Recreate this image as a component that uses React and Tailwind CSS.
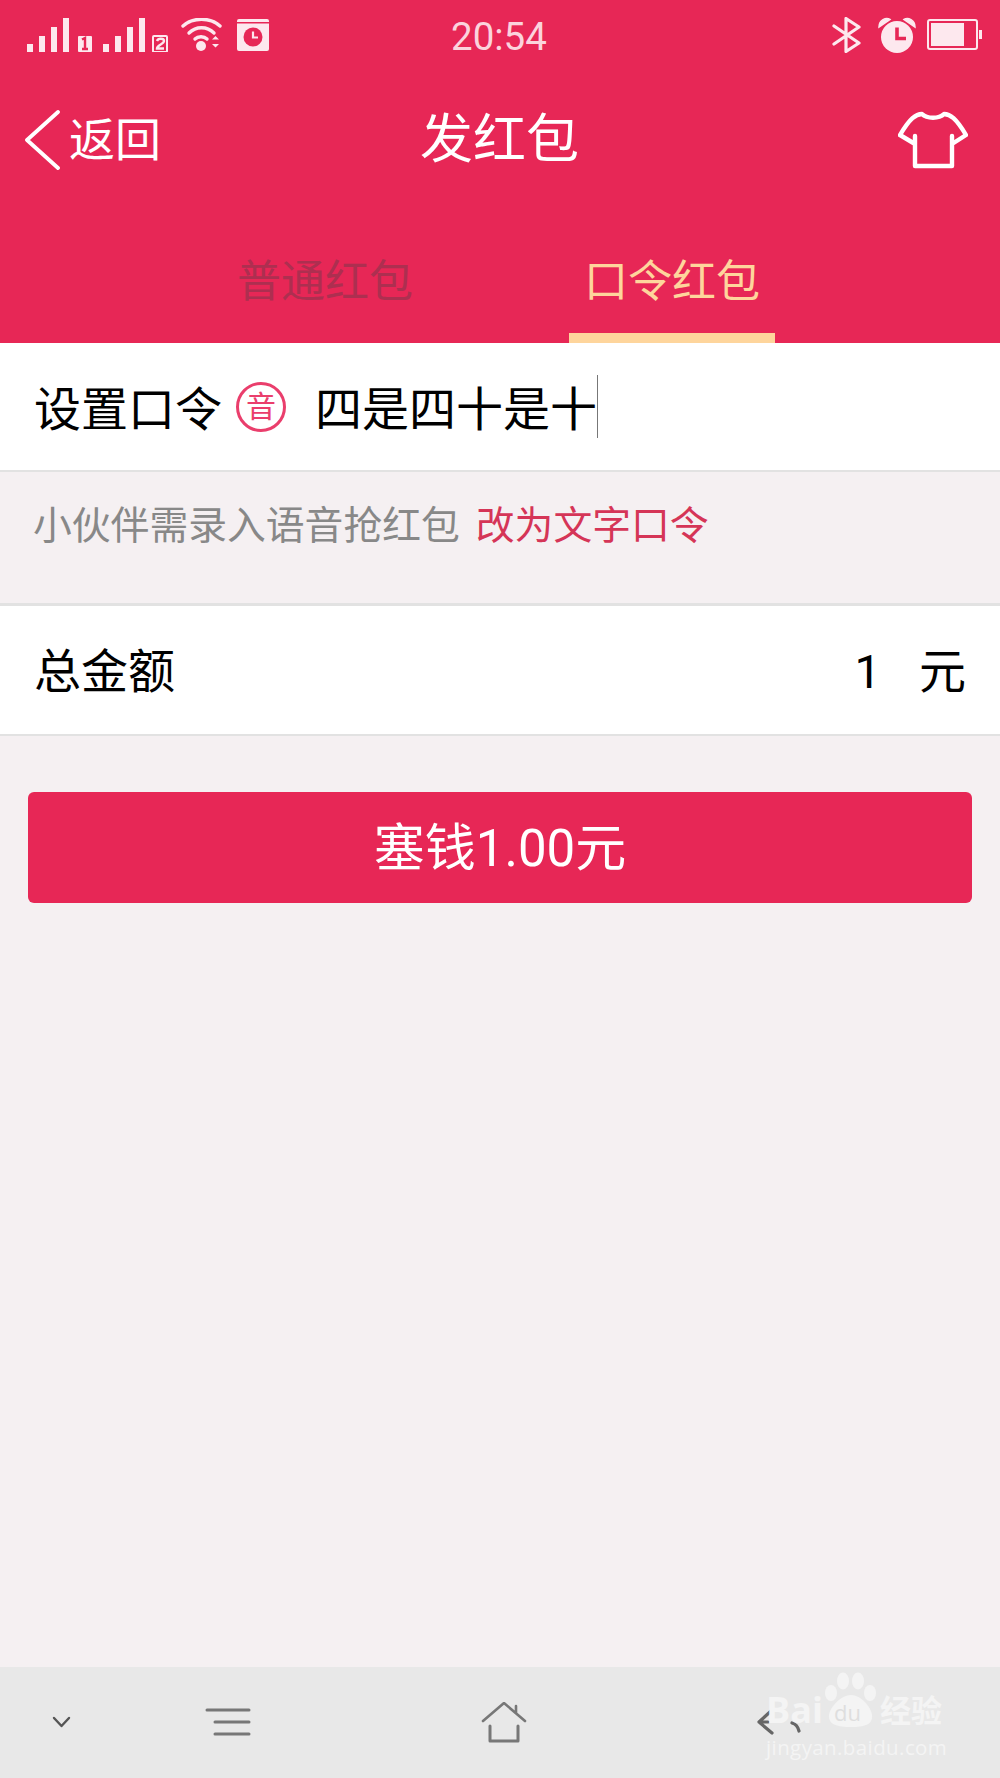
const font = { fontFamily: 'Roboto, "Noto Sans CJK SC", sans-serif' };

function Signal({ n }) {
  return (
    <svg width="76" height="34" viewBox="0 0 76 34" fill="#fde8ee">
      <rect x="0" y="26" width="6" height="8" />
      <rect x="12" y="18" width="6" height="16" />
      <rect x="24" y="9" width="6" height="25" />
      <rect x="36" y="0" width="6" height="34" />
      <rect x={n === 1 ? 51 : 50} y="18" width="14" height="16" rx="1" fill={n === 1 ? '#fde8ee' : 'none'} stroke="#fde8ee" strokeWidth={n === 1 ? 0 : 2} />
      {n === 1 ? (
        <path d="M55 21.500l3-1.500v11M55 31h6" fill="none" stroke="#e72756" strokeWidth="2.400" />
      ) : (
        <path d="M54 23c1-3 7-3 7 0 0 3-7 4-7 7.500h7" fill="none" stroke="#fde8ee" strokeWidth="2.400" />
      )}
    </svg>
  );
}

function StatusBar() {
  return (
    <div className="flex h-[69px] items-center pl-[27px] pr-[18px]">
      <div className="flex w-[260px] items-center">
        <Signal n={1} />
        <Signal n={2} />
        <svg className="ml-[2px] shrink-0" width="42" height="34" viewBox="0 0 42 34" fill="none" stroke="#fde8ee" strokeWidth="3.400" strokeLinecap="round">
          <path d="M2 8C12 -1 29 -1 39 8" />
          <path d="M8 15C15 8 26 8 33 15" />
          <path d="M14 21c3-3 9-3 12 0" />
          <circle cx="20" cy="28" r="5" fill="#fde8ee" stroke="none" />
          <path d="M31 21.500l3.500-3.500 3.500 3.500zM31 26l3.500 3.500 3.500-3.500z" fill="#fde8ee" stroke="none" />
        </svg>
        <svg className="ml-[14px] shrink-0" width="32" height="32" viewBox="0 0 32 32">
          <rect width="32" height="32" rx="2" fill="#fde8ee" />
          <rect y="3" width="32" height="1.500" fill="#e72756" />
          <circle cx="16" cy="18" r="9.500" fill="#e72756" />
          <path d="M16 12.500V18.500H21" fill="none" stroke="#fde8ee" strokeWidth="2.200" />
        </svg>
      </div>
      <div className="ml-[164px] pt-[5px] text-[38.500px] leading-none text-[#fbd3dd]" style={font}>20:54</div>
      <div className="ml-auto flex items-center">
        <svg width="30" height="36" viewBox="0 0 30 36" fill="none" stroke="#fde8ee" strokeWidth="3.200" strokeLinejoin="round" strokeLinecap="round">
          <path d="M2 9L27 26L14 34.500V1.500L27 10L2 27" />
        </svg>
        <svg className="ml-[16px]" width="38" height="36" viewBox="0 0 38 36">
          <circle cx="19" cy="20" r="16" fill="#fde8ee" />
          <path d="M1 10C1 3 8 0 12 2.500ZM37 10C37 3 30 0 26 2.500Z" fill="#fde8ee" stroke="#fde8ee" strokeWidth="1.500" />
          <path d="M19 10.500V21.500H28" fill="none" stroke="#e72756" strokeWidth="3.600" />
        </svg>
        <svg className="ml-[11px]" width="55" height="32" viewBox="0 0 55 32">
          <rect x="1" y="1" width="49" height="29" rx="2" fill="none" stroke="#fde8ee" strokeWidth="2" />
          <rect x="4" y="4" width="33" height="23" fill="#fde8ee" />
          <rect x="52" y="11" width="3" height="9" fill="#fde8ee" />
        </svg>
      </div>
    </div>
  );
}

function NavBar() {
  return (
    <div className="flex h-[142px] items-center pl-[25px] pr-[32px]">
      <div className="flex flex-1 items-center gap-[9px]">
        <svg width="35" height="60" viewBox="0 0 35 60" fill="none" stroke="#fff" strokeWidth="3.800" strokeLinecap="round" strokeLinejoin="round">
          <path d="M33 2L2 30L33 58" />
        </svg>
        <span className="text-[46px] leading-none text-white" style={font}>返回</span>
      </div>
      <span className="ml-[6px] text-[53px] leading-none text-white" style={font}>发红包</span>
      <div className="flex flex-1 justify-end">
        <svg width="70" height="58" viewBox="0 0 70 58" fill="none" stroke="#fff" strokeWidth="4.400" strokeLinejoin="round">
          <path d="M24 3C29 8 41 8 46 3C52 3 58 7 68 24L54 33V25V55H17V25V33L2 24C12 7 18 3 24 3Z" />
        </svg>
      </div>
    </div>
  );
}

function Tabs() {
  return (
    <div className="flex h-[111px]">
      <div className="flex w-[569px] justify-center pt-[28px] pl-[81px]">
        <span className="text-[44px] leading-none text-[#ad2f50]" style={font}>普通红包</span>
      </div>
      <div className="flex w-[206px] flex-col items-center border-b-[10px] border-[#fed59c] pt-[28px]">
        <span className="text-[44px] leading-none text-[#fed59c]" style={font}>口令红包</span>
      </div>
    </div>
  );
}

function BottomBar() {
  return (
    <div className="relative flex h-[111px] items-center bg-[#e8e8e8]">
      <svg className="ml-[52px] shrink-0" width="19" height="13" viewBox="0 0 19 13" fill="none" stroke="#555" strokeWidth="2.400" strokeLinecap="round" strokeLinejoin="round">
        <path d="M2 2L9.500 10L17 2" />
      </svg>
      <svg className="ml-[134px] shrink-0" width="46" height="30" viewBox="0 0 46 30" fill="none" stroke="#777" strokeWidth="3" strokeLinecap="round">
        <path d="M2 2H44M10 14H44M10 26H44" />
      </svg>
      <svg className="ml-[230px] shrink-0" width="46" height="42" viewBox="0 0 46 42" fill="none" stroke="#777" strokeWidth="2.600" strokeLinecap="round" strokeLinejoin="round">
        <path d="M2 19L23 1L44 19M35 4V11" />
        <path d="M9 24V39H37V24" strokeWidth="3" />
      </svg>
      <svg className="ml-[230px] shrink-0" width="46" height="28" viewBox="0 0 46 28" fill="none" stroke="#666" strokeWidth="3.200" strokeLinecap="round" strokeLinejoin="round">
        <path d="M14 2L2 13L15 24M2 13H11M35 14C39 15 41 18 42 22" />
      </svg>

      {/* watermark */}
      <div className="absolute top-[5px] left-[766px] w-[190px] text-[#f4f4f4]" style={{ fontFamily: '"Open Sans", "Noto Sans CJK SC", sans-serif' }}>
        <div className="flex h-[56px] items-end">
          <span className="text-[36px] leading-[36px] font-bold">Bai</span>
          <div className="relative ml-[1px] h-[56px] w-[52px] shrink-0">
            <svg className="absolute top-0 left-0" width="52" height="56" viewBox="0 0 52 56" fill="currentColor">
              <ellipse cx="7" cy="21" rx="6" ry="8" />
              <ellipse cx="19" cy="9" rx="6" ry="8.500" />
              <ellipse cx="34" cy="9" rx="6" ry="8.500" />
              <ellipse cx="46" cy="21" rx="6" ry="8" />
              <path d="M27 23C17 23 6 35 5 43C4 53 14 55 27 55C40 55 49 53 48 43C47 35 37 23 27 23Z" />
            </svg>
            <span className="absolute bottom-[5px] left-[10px] text-[22px] leading-none text-[#dedede]">du</span>
          </div>
          <span className="ml-[4px] text-[31px] leading-[36px] font-bold whitespace-nowrap">经验</span>
        </div>
        <div className="mt-[6px] text-[20.500px] leading-[26px] tracking-[0.4px] whitespace-nowrap">jingyan.baidu.com</div>
      </div>
    </div>
  );
}

export default function App() {
  return (
    <div className="flex h-[1778px] w-[1000px] flex-col overflow-hidden bg-[#f5f0f2]" style={font}>
      <div className="h-[343px] shrink-0 bg-[#e72756]">
        <StatusBar />
        <NavBar />
        <div className="h-[21px]" />
        <Tabs />
      </div>

      {/* password row */}
      <div className="flex h-[129px] shrink-0 items-center border-b-[2px] border-[#e2e2e2] bg-white pt-[5px] pl-[34px]">
        <span className="text-[47px] leading-none text-black">设置口令</span>
        <span className="ml-[14px] flex h-[50px] w-[50px] -translate-y-[2px] items-center justify-center rounded-full border-[3px] border-[#ea3e6c] text-[30px] leading-none text-[#ea3e6c]">音</span>
        <span className="ml-[29px] text-[47px] leading-none text-black">四是四十是十</span>
        <span className="-mt-[5px] h-[63px] w-[1px] bg-[#777]" />
      </div>

      {/* hint */}
      <div className="flex h-[134px] shrink-0 items-start border-b-[3px] border-[#e2e2e2] pt-[35px] pl-[33px] text-[38.800px] leading-none">
        <span className="text-[#888]">小伙伴需录入语音抢红包</span>
        <span className="ml-[16px] text-[#d53557]">改为文字口令</span>
      </div>

      {/* amount row */}
      <div className="flex h-[130px] shrink-0 items-center justify-between border-b-[2px] border-[#e2e2e2] bg-white px-[34px] pt-[3px] text-[47px] leading-none text-black">
        <span>总金额</span>
        <span className="flex items-center gap-[38px]">
          <span>1</span>
          <span>元</span>
        </span>
      </div>

      <div className="px-[28px] pt-[56px]">
        <button className="flex h-[111px] w-full items-center justify-center rounded-[6px] bg-[#e72756] pt-[2px] text-[51px] leading-none text-white">
          塞钱1.00元
        </button>
      </div>

      <div className="flex-1" />
      <BottomBar />
    </div>
  );
}
